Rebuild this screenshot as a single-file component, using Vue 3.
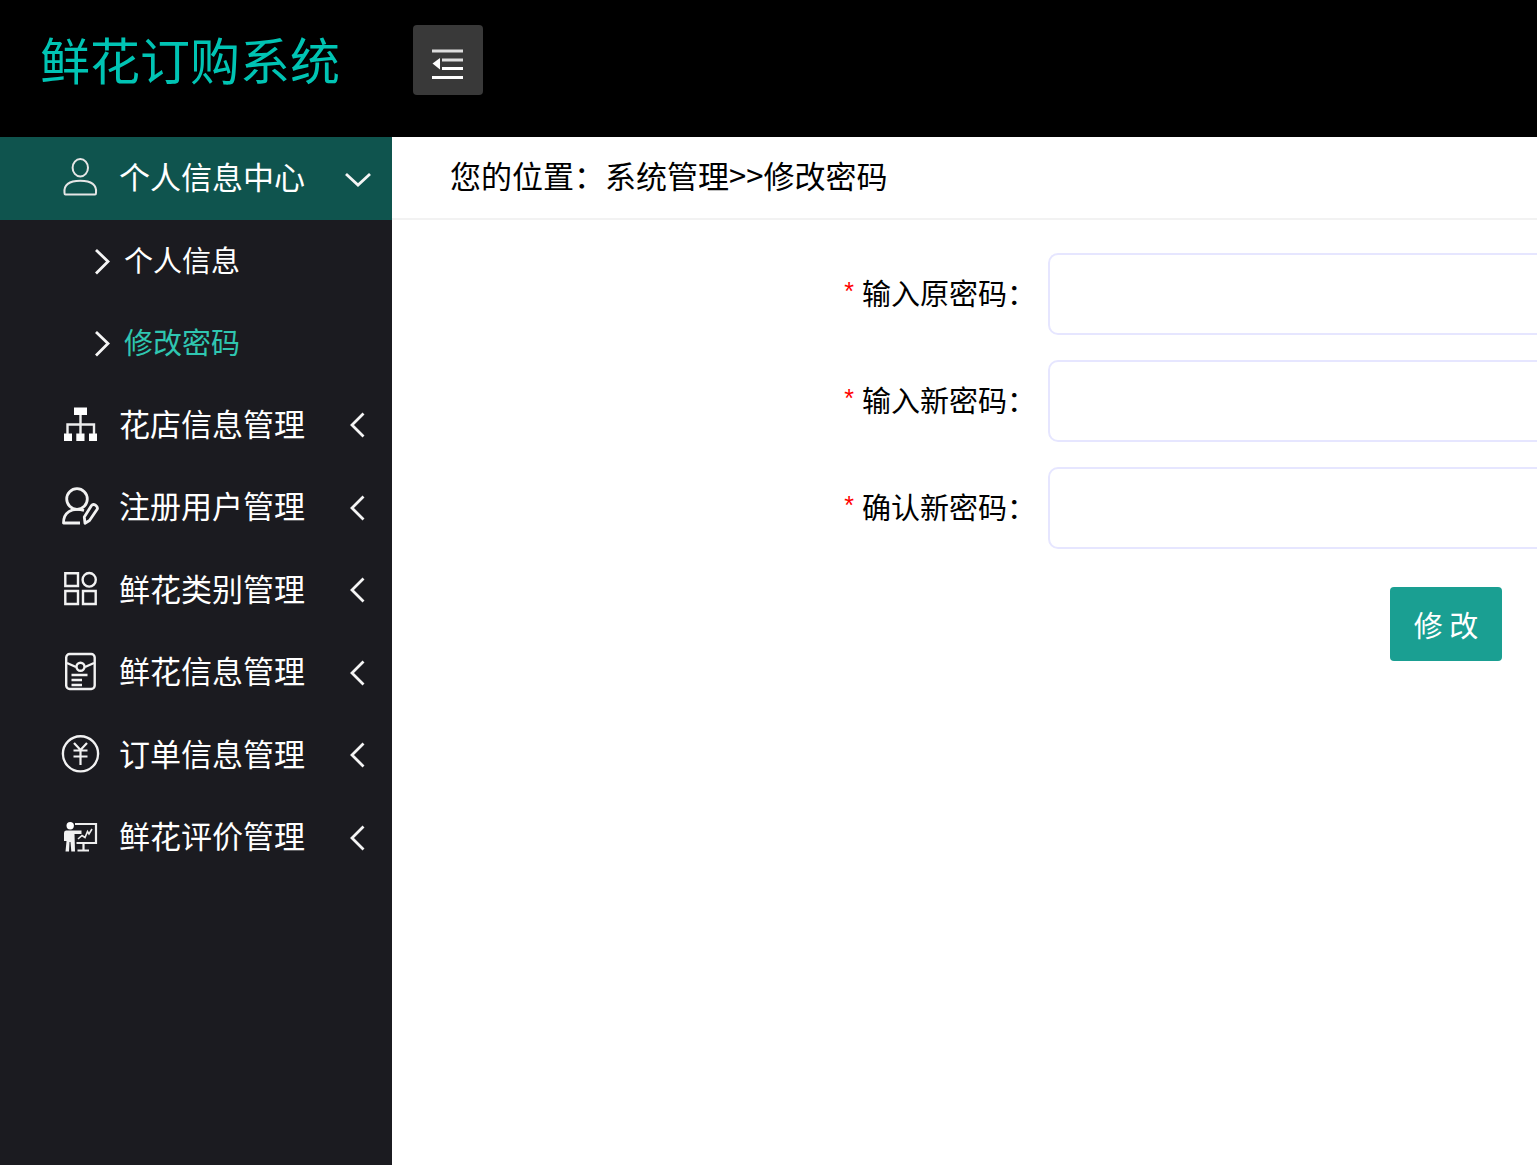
<script setup>
import { ref } from 'vue'

const collapsed = ref(false)
const form = ref({ current: '', next: '', confirm: '' })

const menu = [
  {
    title: '个人信息中心',
    icon: 'person',
    open: true,
    children: [
      { title: '个人信息', active: false },
      { title: '修改密码', active: true },
    ],
  },
  { title: '花店信息管理', icon: 'tree' },
  { title: '注册用户管理', icon: 'edit-user' },
  { title: '鲜花类别管理', icon: 'grid' },
  { title: '鲜花信息管理', icon: 'card' },
  { title: '订单信息管理', icon: 'yen' },
  { title: '鲜花评价管理', icon: 'board' },
]

const fields = [
  { key: 'current', label: '输入原密码：' },
  { key: 'next', label: '输入新密码：' },
  { key: 'confirm', label: '确认新密码：' },
]
</script>

<template>
  <div class="page">
    <header class="header">
      <h1 class="logo">鲜花订购系统</h1>
      <button class="toggle" type="button" aria-label="收起菜单" @click="collapsed = !collapsed">
        <svg width="34" height="34" viewBox="0 0 34 34" aria-hidden="true">
          <g fill="none" stroke="#ddd" stroke-width="2.8">
            <path d="M1 5H32M11 14H32" />
            <path d="M11 22.500H32M1 31.500H32" stroke="#fff" />
          </g>
          <path d="M1.500 17.500L9 12V23.500Z" fill="#fff" />
        </svg>
      </button>
    </header>

    <div class="body">
      <nav v-show="!collapsed" class="sidebar">
        <ul class="menu">
          <li v-for="item in menu" :key="item.title" class="item">
            <a href="#" class="link" :class="{ open: item.open }">
              <svg class="icon" width="40" height="40" viewBox="0 0 40 40" aria-hidden="true">
                <g v-if="item.icon === 'person'" fill="none" stroke="#e6e6e6" stroke-width="2">
                  <ellipse cx="20.300" cy="9.800" rx="7.700" ry="8.700" />
                  <path d="M4.500 35C3.500 27 9 22.800 20.300 22.800S37 27 36 35Q36 36.500 35 36.500H5.500Q4.500 36.500 4.500 35Z" />
                </g>
                <g v-else-if="item.icon === 'tree'">
                  <path d="M14 3.500H27V11H14ZM4 29.500H12V37H4ZM16.300 29.500H24.500V37H16.300ZM29 29.500H37V37H29Z" fill="#fff" />
                  <path d="M20.500 11V30M7.500 30V20.500H34V30" fill="none" stroke="#eee" stroke-width="2.400" />
                </g>
                <g v-else-if="item.icon === 'edit-user'" fill="none" stroke="#f2f2f2" stroke-width="2.800" stroke-linejoin="round">
                  <circle cx="17" cy="12" r="10.300" />
                  <path d="M24 23.500C11 20 3.500 26 3.500 36H20" />
                  <path d="M31.500 18.500Q33 16.500 35.500 18.200T37.300 22L29.500 33.500L25 36.200L24.300 30Z" />
                </g>
                <g v-else-if="item.icon === 'grid'" fill="none" stroke="#f2f2f2" stroke-width="2.400">
                  <path d="M5.300 4.300H18V17H5.300ZM5.300 22H18V35H5.300ZM23 22H35.700V35H23Z" />
                  <ellipse cx="29.200" cy="10.800" rx="6.600" ry="6.800" />
                </g>
                <g v-else-if="item.icon === 'card'" fill="none" stroke="#f2f2f2" stroke-width="2.400">
                  <rect x="6.200" y="2" width="28.500" height="35" rx="3.500" />
                  <path d="M7 11L16 15M34 11L25 15M11.500 23H27.500M11.500 28H22M11.500 33H22" />
                  <circle cx="20.500" cy="14.800" r="4" />
                </g>
                <g v-else-if="item.icon === 'yen'" fill="none" stroke="#f2f2f2">
                  <circle cx="20.500" cy="19.800" r="17.600" stroke-width="2.400" />
                  <path d="M14 9L20.500 16L27 9M13.500 16.500H27.500M13.500 22.500H27.500M20.500 16V31" stroke-width="2.200" />
                </g>
                <g v-else>
                  <circle cx="10.200" cy="8.800" r="3.700" fill="#fff" />
                  <path d="M6 13.500H21.500V17H14.500L15 34.500H11.300L10.500 25H9.500L9 34.500H5.500L6.500 24H4V16Q4 13.500 6 13.500Z" fill="#f2f2f2" />
                  <path d="M15 7H36V26H16.500M23.500 26V33M17.500 33.500H29" fill="none" stroke="#eee" stroke-width="2.200" />
                  <path d="M18 22L22 18.500L25 20.500L27.500 14.500L29 17L32 12" fill="none" stroke="#eee" stroke-width="1.600" />
                </g>
              </svg>
              <span class="title">{{ item.title }}</span>
              <svg class="arrow" width="28" height="28" viewBox="0 0 28 28" aria-hidden="true">
                <path :d="item.open ? 'M2 9L14 20L26 9' : 'M19.500 2.500L8 14L19.500 25.500'" />
              </svg>
            </a>
            <ul v-if="item.children" class="submenu">
              <li v-for="child in item.children" :key="child.title">
                <a href="#" class="sublink" :class="{ active: child.active }">
                  <svg class="arrow" width="28" height="28" viewBox="0 0 28 28" aria-hidden="true">
                    <path d="M8 3L20 14.500L8 26.500" />
                  </svg>
                  <span class="subtitle">{{ child.title }}</span>
                </a>
              </li>
            </ul>
          </li>
        </ul>
      </nav>

      <main class="main">
        <div class="crumbs">您的位置：系统管理&gt;&gt;修改密码</div>
        <form class="form" @submit.prevent>
          <div v-for="field in fields" :key="field.key" class="row">
            <label class="label" :for="field.key"><span class="star">*</span>{{ field.label }}</label>
            <input :id="field.key" v-model="form[field.key]" class="input" type="password" />
          </div>
          <div class="actions">
            <button class="submit" type="submit">修 改</button>
          </div>
        </form>
      </main>
    </div>
  </div>
</template>

<style>
body {
  margin: 0;
}
</style>

<style scoped>
.page {
  display: flex;
  flex-direction: column;
  min-height: 100vh;
  overflow: hidden;
  background: #fff;
  color: #000;
  font-family: "Noto Sans CJK SC", sans-serif;
}

.header {
  display: flex;
  align-items: flex-start;
  box-sizing: border-box;
  height: 137px;
  padding-top: 25px;
  background: #000;
}

.logo {
  box-sizing: border-box;
  width: 413px;
  margin: 0;
  padding-left: 40px;
  color: #00c4b4;
  font-size: 50px;
  font-weight: 400;
  line-height: 66px;
}

.toggle {
  display: flex;
  align-items: center;
  justify-content: center;
  width: 70px;
  height: 70px;
  padding: 6px 0 0;
  border: 0;
  border-radius: 4px;
  background: #393939;
}

.body {
  display: flex;
  flex: 1;
}

.sidebar {
  flex: none;
  width: 392px;
  background: #1b1b20;
}

.menu,
.submenu {
  margin: 0;
  padding: 0;
  list-style: none;
}

.link,
.sublink {
  display: flex;
  align-items: center;
  box-sizing: border-box;
  height: 82px;
  color: #fff;
  text-decoration: none;
}

.link {
  padding: 0 20px 0 60px;
  font-size: 31px;
}

.item:nth-child(odd) > .link {
  height: 83px;
}

.link.open {
  background: #0f544e;
}

.icon {
  flex: none;
  margin-bottom: 2px;
}

.title {
  flex: 1;
  margin-left: 19px;
  padding-bottom: 6px;
}

.arrow {
  flex: none;
  fill: none;
  stroke: #f5f5f5;
  stroke-width: 2.8px;
}

.sublink {
  gap: 8px;
  padding-left: 88px;
  font-size: 29px;
}

.subtitle {
  padding-bottom: 4px;
}

.sublink.active {
  color: #2fc6b0;
}

.main {
  flex: 1;
  min-width: 0;
  overflow: hidden;
}

.crumbs {
  box-sizing: border-box;
  height: 83px;
  padding-left: 58px;
  border-bottom: 2px solid #f2f2f2;
  font-size: 31px;
  line-height: 76px;
}

/* The form is laid out on a canvas wider than the content pane */
.form {
  display: flex;
  flex-direction: column;
  gap: 25px;
  width: 191%;
  padding-top: 33px;
}

.row {
  display: flex;
  align-items: center;
}

.label {
  box-sizing: border-box;
  width: 30%;
  padding: 0 12px 5px 0;
  font-size: 29px;
  text-align: right;
}

.star {
  margin-right: 8px;
  color: #f00;
  font-family: "Liberation Sans", sans-serif;
  font-size: 25px;
  line-height: 1;
  vertical-align: 5px;
}

.input {
  box-sizing: border-box;
  flex: 1;
  height: 82px;
  padding: 0 20px;
  border: 2px solid #e6e6ff;
  border-radius: 10px;
  background: #fff;
  font-size: 29px;
}

.actions {
  display: flex;
  box-sizing: border-box;
  padding: 13px 0 0 998px;
}

.submit {
  width: 112px;
  height: 74px;
  padding: 0;
  border: 0;
  border-radius: 4px;
  background: #1a9f92;
  color: #fff;
  font-family: inherit;
  font-size: 29px;
}
</style>
